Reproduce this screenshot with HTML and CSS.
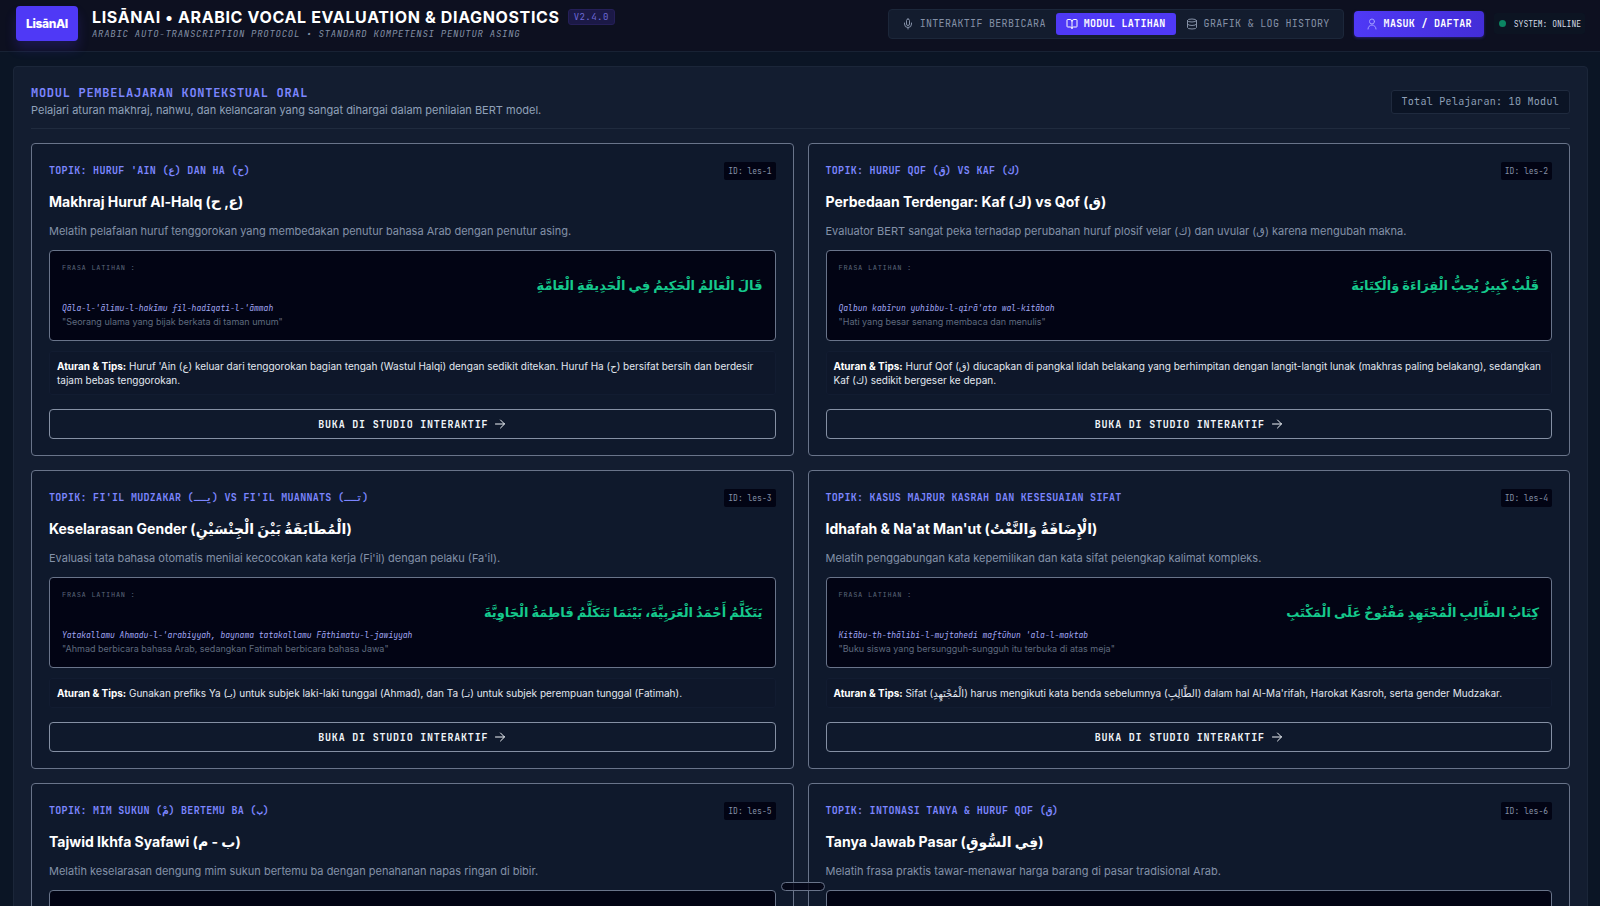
FILE: index.html
```html
<!DOCTYPE html>
<html lang="id">
<head>
  <meta charset="UTF-8" />
  <meta name="viewport" content="width=device-width, initial-scale=1.0"/>
  <title>LisānAI</title>
  <link rel="stylesheet" href="styles.css">
</head>
<body>

  <header class="topbar">
    <div class="brand">
      <div class="logo">LisānAI</div>
      <div>
        <div class="brand-row">
          <h1>LISĀNAI • ARABIC VOCAL EVALUATION &amp; DIAGNOSTICS</h1>
          <span class="version">V2.4.0</span>
        </div>
        <p class="tagline">ARABIC AUTO-TRANSCRIPTION PROTOCOL • STANDARD KOMPETENSI PENUTUR ASING</p>
      </div>
    </div>

    <div class="actions">
      <nav class="tabs">
        <button class="tab">
          <svg class="icon" viewBox="0 0 24 24"><path d="M12 2a3 3 0 0 0-3 3v7a3 3 0 0 0 6 0V5a3 3 0 0 0-3-3Z"/><path d="M19 10v2a7 7 0 0 1-14 0v-2"/><path d="M12 19v3"/></svg>
          INTERAKTIF BERBICARA
        </button>
        <button class="tab active">
          <svg class="icon" viewBox="0 0 24 24"><path d="M12 7v14"/><path d="M3 18a1 1 0 0 1-1-1V4a1 1 0 0 1 1-1h5a4 4 0 0 1 4 4 4 4 0 0 1 4-4h5a1 1 0 0 1 1 1v13a1 1 0 0 1-1 1h-6a3 3 0 0 0-3 3 3 3 0 0 0-3-3z"/></svg>
          MODUL LATIHAN
        </button>
        <button class="tab">
          <svg class="icon" viewBox="0 0 24 24"><ellipse cx="12" cy="5" rx="9" ry="3"/><path d="M3 5v14a9 3 0 0 0 18 0V5"/><path d="M3 12a9 3 0 0 0 18 0"/></svg>
          GRAFIK &amp; LOG HISTORY
        </button>
      </nav>
      <button class="login">
        <svg class="icon" viewBox="0 0 24 24"><circle cx="12" cy="7" r="5"/><path d="M20 22a8 8 0 0 0-16 0"/></svg>
        MASUK / DAFTAR
      </button>
      <div class="status"><span class="dot"></span>SYSTEM: ONLINE</div>
    </div>
  </header>

  <main>
    <section class="panel">
      <div class="panel-head">
        <div>
          <h2>MODUL PEMBELAJARAN KONTEKSTUAL ORAL</h2>
          <p>Pelajari aturan makhraj, nahwu, dan kelancaran yang sangat dihargai dalam penilaian BERT model.</p>
        </div>
        <span class="total">Total Pelajaran: 10 Modul</span>
      </div>

      <div class="grid">
        <article class="card">
          <div class="card-top"><span class="topic">TOPIK: HURUF 'AIN (ع) DAN HA (ح)</span><span class="id">ID: les-1</span></div>
          <h3>Makhraj Huruf Al-Halq (ع, ح)</h3>
          <p class="desc">Melatih pelafalan huruf tenggorokan yang membedakan penutur bahasa Arab dengan penutur asing.</p>
          <div class="phrase">
            <span class="label">FRASA LATIHAN :</span>
            <p class="arabic" lang="ar" dir="rtl">قَالَ الْعَالِمُ الْحَكِيمُ فِي الْحَدِيقَةِ الْعَامَّةِ</p>
            <p class="latin">Qāla-l-'ālimu-l-hakīmu fil-hadīqati-l-'āmmah</p>
            <p class="meaning">"Seorang ulama yang bijak berkata di taman umum"</p>
          </div>
          <p class="tips"><strong>Aturan &amp; Tips:</strong> Huruf 'Ain (ع) keluar dari tenggorokan bagian tengah (Wastul Halqi) dengan sedikit ditekan. Huruf Ha (ح) bersifat bersih dan berdesir tajam bebas tenggorokan.</p>
          <button class="open">BUKA DI STUDIO INTERAKTIF <svg class="icon" viewBox="0 0 24 24"><path d="M3 12h18"/><path d="m13 4 8 8-8 8"/></svg></button>
        </article>

        <article class="card">
          <div class="card-top"><span class="topic">TOPIK: HURUF QOF (ق) VS KAF (ك)</span><span class="id">ID: les-2</span></div>
          <h3>Perbedaan Terdengar: Kaf (ك) vs Qof (ق)</h3>
          <p class="desc">Evaluator BERT sangat peka terhadap perubahan huruf plosif velar (ك) dan uvular (ق) karena mengubah makna.</p>
          <div class="phrase">
            <span class="label">FRASA LATIHAN :</span>
            <p class="arabic" lang="ar" dir="rtl">قَلْبٌ كَبِيرٌ يُحِبُّ الْقِرَاءَةَ وَالْكِتَابَةَ</p>
            <p class="latin">Qalbun kabīrun yuhibbu-l-qirā'ata wal-kitābah</p>
            <p class="meaning">"Hati yang besar senang membaca dan menulis"</p>
          </div>
          <p class="tips"><strong>Aturan &amp; Tips:</strong> Huruf Qof (ق) diucapkan di pangkal lidah belakang yang berhimpitan dengan langit-langit lunak (makhras paling belakang), sedangkan Kaf (ك) sedikit bergeser ke depan.</p>
          <button class="open">BUKA DI STUDIO INTERAKTIF <svg class="icon" viewBox="0 0 24 24"><path d="M3 12h18"/><path d="m13 4 8 8-8 8"/></svg></button>
        </article>

        <article class="card">
          <div class="card-top"><span class="topic">TOPIK: FI'IL MUDZAKAR (يــ) VS FI'IL MUANNATS (تــ)</span><span class="id">ID: les-3</span></div>
          <h3>Keselarasan Gender (الْمُطَابَقَةُ بَيْنَ الْجِنْسَيْنِ)</h3>
          <p class="desc">Evaluasi tata bahasa otomatis menilai kecocokan kata kerja (Fi'il) dengan pelaku (Fa'il).</p>
          <div class="phrase">
            <span class="label">FRASA LATIHAN :</span>
            <p class="arabic" lang="ar" dir="rtl">يَتَكَلَّمُ أَحْمَدُ الْعَرَبِيَّةَ، بَيْنَمَا تَتَكَلَّمُ فَاطِمَةُ الْجَاوِيَّةَ</p>
            <p class="latin">Yatakallamu Ahmadu-l-'arabiyyah, baynama tatakallamu Fāthimatu-l-jawiyyah</p>
            <p class="meaning">"Ahmad berbicara bahasa Arab, sedangkan Fatimah berbicara bahasa Jawa"</p>
          </div>
          <p class="tips"><strong>Aturan &amp; Tips:</strong> Gunakan prefiks Ya (يـ) untuk subjek laki-laki tunggal (Ahmad), dan Ta (تـ) untuk subjek perempuan tunggal (Fatimah).</p>
          <button class="open">BUKA DI STUDIO INTERAKTIF <svg class="icon" viewBox="0 0 24 24"><path d="M3 12h18"/><path d="m13 4 8 8-8 8"/></svg></button>
        </article>

        <article class="card">
          <div class="card-top"><span class="topic">TOPIK: KASUS MAJRUR KASRAH DAN KESESUAIAN SIFAT</span><span class="id">ID: les-4</span></div>
          <h3>Idhafah &amp; Na'at Man'ut (الْإِضَافَةُ وَالنَّعْتُ)</h3>
          <p class="desc">Melatih penggabungan kata kepemilikan dan kata sifat pelengkap kalimat kompleks.</p>
          <div class="phrase">
            <span class="label">FRASA LATIHAN :</span>
            <p class="arabic" lang="ar" dir="rtl">كِتَابُ الطَّالِبِ الْمُجْتَهِدِ مَفْتُوحٌ عَلَى الْمَكْتَبِ</p>
            <p class="latin">Kitābu-th-thālibi-l-mujtahedi maftūhun 'ala-l-maktab</p>
            <p class="meaning">"Buku siswa yang bersungguh-sungguh itu terbuka di atas meja"</p>
          </div>
          <p class="tips"><strong>Aturan &amp; Tips:</strong> Sifat (الْمُجْتَهِدِ) harus mengikuti kata benda sebelumnya (الطَّالِبِ) dalam hal Al-Ma'rifah, Harokat Kasroh, serta gender Mudzakar.</p>
          <button class="open">BUKA DI STUDIO INTERAKTIF <svg class="icon" viewBox="0 0 24 24"><path d="M3 12h18"/><path d="m13 4 8 8-8 8"/></svg></button>
        </article>

        <article class="card">
          <div class="card-top"><span class="topic">TOPIK: MIM SUKUN (مْ) BERTEMU BA (ب)</span><span class="id">ID: les-5</span></div>
          <h3>Tajwid Ikhfa Syafawi (ب - م)</h3>
          <p class="desc">Melatih keselarasan dengung mim sukun bertemu ba dengan penahanan napas ringan di bibir.</p>
          <div class="phrase"></div>
        </article>

        <article class="card">
          <div class="card-top"><span class="topic">TOPIK: INTONASI TANYA &amp; HURUF QOF (ق)</span><span class="id">ID: les-6</span></div>
          <h3>Tanya Jawab Pasar (فِي السُّوقِ)</h3>
          <p class="desc">Melatih frasa praktis tawar-menawar harga barang di pasar tradisional Arab.</p>
          <div class="phrase"></div>
        </article>
      </div>
    </section>
  </main>

  <div class="handle"></div>

</body>
</html>
```
FILE: styles.css
```css
* {
  box-sizing: border-box;
}
body {
  margin: 0;
  height: 100vh;
  display: flex;
  flex-direction: column;
  overflow: hidden;
  font-family: Inter, "DejaVu Sans", sans-serif;
  background: #0b1525;
  color: #fff;
}
h1, h2, h3, p {
  margin: 0;
}
button {
  font: inherit;
  color: inherit;
  background: none;
  border: none;
  padding: 0;
  cursor: pointer;
}
.icon {
  width: 12px;
  height: 12px;
  fill: none;
  stroke: currentColor;
  stroke-width: 2;
  stroke-linecap: round;
  stroke-linejoin: round;
}

/* header */
.topbar {
  display: flex;
  justify-content: space-between;
  align-items: center;
  height: 52px;
  padding: 0 15px 4px 16px;
  background: #0d1020;
  border-bottom: 1px solid #182234;
  flex-shrink: 0;
}
.brand, .brand-row, .actions, .tabs, .tab, .login, .status {
  display: flex;
  align-items: center;
}
.brand {
  gap: 14px;
}
.logo {
  width: 62px;
  height: 35px;
  display: flex;
  align-items: center;
  justify-content: center;
  border-radius: 4px;
  background: #4f39f6;
  box-shadow: 0 8px 12px rgba(79, 57, 246, 0.2);
  font-size: 12px;
  font-weight: 800;
  letter-spacing: -0.03em;
}
.brand-row {
  gap: 8px;
}
h1 {
  font-size: 16px;
  line-height: 20px;
  font-weight: 700;
  letter-spacing: 0.04em;
}
.version, .tagline, .tab, .login, .status, .total, h2, .topic, .id, .label, .latin, .open {
  font-family: "JetBrains Mono", "DejaVu Sans Mono", monospace;
}
.version {
  padding: 0 5px;
  border: 1px solid #251f58;
  border-radius: 3px;
  background: #1b1946;
  color: #6f6bd8;
  font-size: 9px;
  line-height: 14px;
  letter-spacing: 0.05em;
}
.tagline {
  font-size: 9px;
  line-height: 14px;
  font-style: italic;
  letter-spacing: 0.08em;
  color: #8490a6;
}
.actions {
  gap: 10px;
}
.tabs {
  height: 30px;
  padding: 3px;
  border: 1px solid #1c273a;
  border-radius: 4px;
  background: #131c2e;
}
.tab {
  gap: 6px;
  height: 22px;
  padding: 0 10px;
  border-radius: 3px;
  color: #8490a6;
  font-size: 10px;
  letter-spacing: 0.03em;
}
.tab.active {
  background: #4f39f6;
  color: #fff;
  font-weight: 700;
}
.login {
  gap: 6px;
  height: 26px;
  padding: 0 12px;
  border-radius: 4px;
  background: linear-gradient(90deg, #4f39f6, #432dd7);
  box-shadow: 0 1px 3px rgba(79, 57, 246, 0.4);
  font-size: 10px;
  font-weight: 700;
  letter-spacing: 0.03em;
}
.login .icon {
  color: #a3a0ff;
}
.status {
  gap: 8px;
  height: 21px;
  padding: 0 4px 0 5px;
  border-radius: 3px;
  background: #0c1422;
  color: #d5dbe6;
  font-size: 8px;
}
.dot {
  width: 7px;
  height: 7px;
  border-radius: 50%;
  background: #0b8562;
}

/* panel */
main {
  flex: 1;
  min-height: 0;
  padding: 14px 12px 14px 13px;
  overflow-y: auto;
  scrollbar-width: none;
}
.panel {
  padding: 17px;
  border: 1px solid #1b2639;
  border-radius: 4px;
  background: #131d30;
}
.panel-head {
  display: flex;
  justify-content: space-between;
  align-items: center;
  padding: 1px 0 9px;
  margin-bottom: 14px;
  border-bottom: 1px solid #202b3e;
}
h2 {
  font-size: 12px;
  line-height: 17px;
  font-weight: 700;
  letter-spacing: 0.06em;
  color: #7c86ff;
}
.panel-head p {
  font-size: 11px;
  line-height: 17px;
  color: #90a1b9;
}
.total {
  padding: 0 10px;
  border: 1px solid #1f2a3e;
  border-radius: 3px;
  background: #0b1425;
  color: #90a1b9;
  font-size: 10px;
  line-height: 22px;
  letter-spacing: 0.03em;
}
.grid {
  display: grid;
  grid-template-columns: 1fr 1fr;
  gap: 14px;
}

/* lesson cards */
.card {
  padding: 18px 17px 16px;
  border: 1px solid #69748a;
  border-radius: 4px;
  background: #0f192c;
}
.card-top {
  display: flex;
  justify-content: space-between;
  align-items: center;
  height: 18px;
}
.topic {
  font-size: 10px;
  line-height: 18px;
  font-weight: 700;
  letter-spacing: 0.03em;
  color: #7c86ff;
}
.id {
  padding: 0 4px;
  border-radius: 2px;
  background: #020414;
  color: #8490a6;
  font-size: 8px;
  line-height: 18px;
}
h3 {
  height: 20px;
  margin-top: 12px;
  font-size: 14px;
  line-height: 20px;
  font-weight: 700;
}
.desc {
  height: 18px;
  margin: 10px 0;
  font-size: 11px;
  line-height: 18px;
  color: #8391a8;
}
.phrase {
  height: 91px;
  padding: 12px;
  border: 1px solid #69748a;
  border-radius: 4px;
  background: #020414;
}
.label {
  display: block;
  height: 10px;
  font-size: 7px;
  line-height: 10px;
  letter-spacing: 0.1em;
  color: #5a6478;
}
.arabic {
  height: 28px;
  font-size: 13px;
  line-height: 24px;
  font-weight: 700;
  color: #15c98c;
}
.latin {
  height: 14px;
  font-size: 8px;
  line-height: 14px;
  font-style: italic;
  color: #a3a8f5;
}
.meaning {
  height: 14px;
  font-size: 9px;
  line-height: 14px;
  color: #5f6a7e;
}
.tips {
  margin: 10px 0 14px;
  padding: 7px;
  border: 1px solid #121c31;
  border-radius: 3px;
  background: #0e172a;
  font-size: 10px;
  line-height: 14px;
  color: #e2e8f0;
}
.tips strong {
  color: #fff;
}
.open {
  display: flex;
  align-items: center;
  justify-content: center;
  gap: 6px;
  width: 100%;
  height: 30px;
  border: 1px solid #8590a4;
  border-radius: 4px;
  color: #f1f5f9;
  font-size: 10px;
  font-weight: 700;
  letter-spacing: 0.08em;
}

/* floating drag handle */
.handle {
  position: fixed;
  bottom: 15px;
  left: 50%;
  width: 44px;
  height: 9px;
  margin-left: -19px;
  border: 1px solid #69748a;
  border-radius: 5px;
  background: rgba(2, 4, 20, 0.8);
}
```
